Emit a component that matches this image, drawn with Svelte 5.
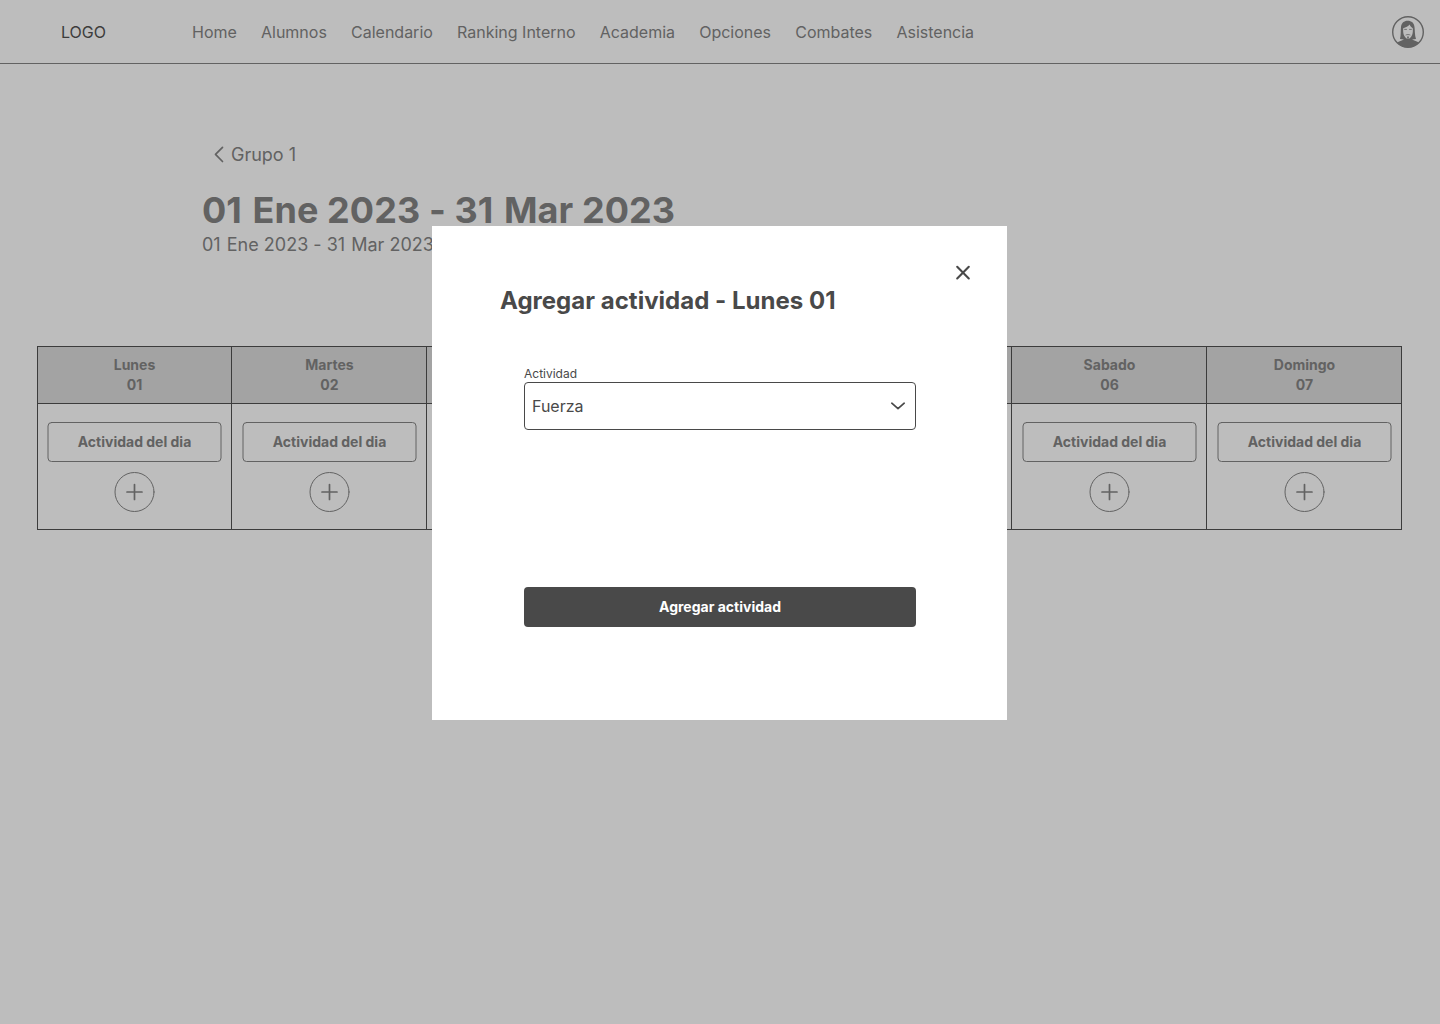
<script>
  const links = ['Home', 'Alumnos', 'Calendario', 'Ranking Interno', 'Academia', 'Opciones', 'Combates', 'Asistencia'];
  const days = [
    ['Lunes', '01'],
    ['Martes', '02'],
    ['Miercoles', '03'],
    ['Jueves', '04'],
    ['Viernes', '05'],
    ['Sabado', '06'],
    ['Domingo', '07']
  ];
</script>

{#snippet dates()}<span class="date-day">01</span> Ene 2023 - <span class="date-day">31</span> Mar 2023{/snippet}

<div class="page">
  <header>
    <span class="logo">LOGO</span>
    <nav>
      {#each links as link}
        <span>{link}</span>
      {/each}
    </nav>
    <svg class="avatar" width="32" height="32" viewBox="0 0 32 32">
      <circle cx="16" cy="16" r="15.300" fill="none" stroke="#626262" stroke-width="1.400" />
      <path fill="#626262" d="M5 26.500C7 25.200 9.800 24.800 12 23.500L8 23C9 19 8.600 14.500 9 11C9.500 7 12 4.800 15.500 4.800C19.800 4.800 22 7 22.500 11C23 14.500 22.600 19 24 23L20 23.500C22.200 24.800 25 25.200 27 26.500C24 29.800 20.500 31.200 16 31.200C11.500 31.200 8 29.800 5 26.500Z" />
      <path fill="#bdbdbd" d="M11.200 12.200C13.800 11.600 16.300 10.300 17.600 8.600C18.300 10.200 19.500 11.600 20.800 12.200C21.100 16 20.600 18.700 19.300 20.400C18.200 22 17.300 22.700 16 22.700C14.700 22.700 13.800 22 12.700 20.400C11.400 18.700 10.900 16 11.200 12.200Z" />
      <path class="face" d="M12.600 13.400h1.900M17.500 13.400h1.900M14 18.900c1-.5 3-.5 4 0" />
      <path fill="#626262" d="M15.200 20.500h1.600v2h-1.600z" />
    </svg>
  </header>

  <main>
    <div class="back">
      <svg width="10" height="18" viewBox="0 0 10 18"><path d="M8.500 1.300L1.500 8.300L8.500 15.500" /></svg>
      <span>Grupo 1</span>
    </div>
    <h1>{@render dates()}</h1>
    <p class="range">{@render dates()}</p>

    <div class="week">
      {#each days as [name, number]}
        <section class="day">
          <div class="day-head"><span>{name}</span><span>{number}</span></div>
          <div class="day-body">
            <div class="activity">
              <svg width="175" height="40"><rect x="1" y=".5" width="173" height="39" rx="3.500" /></svg>
              <span>Actividad del dia</span>
            </div>
            <svg class="plus" width="41" height="40">
              <circle cx="20.500" cy="20" r="19.500" />
              <path d="M20.500 12.500v15M13 20h15" />
            </svg>
          </div>
        </section>
      {/each}
    </div>
  </main>

  <div class="modal">
    <svg class="close" width="16" height="16" viewBox="0 0 16 16"><path d="M2.200 1.800L13.800 13.400M13.800 1.800L2.200 13.400" /></svg>
    <h2>Agregar actividad - Lunes 01</h2>
    <div class="form">
      <span class="label">Actividad</span>
      <div class="select">
        <span>Fuerza</span>
        <svg width="16" height="10" viewBox="0 0 16 10"><path d="M1.800 2.200L8 7.700L14.200 2.200" /></svg>
      </div>
      <button>Agregar actividad</button>
    </div>
  </div>
</div>

<style>
  :global(body) {
    background: #bdbdbd;
  }
  .page {
    position: relative;
    box-sizing: border-box;
    width: 1440px;
    height: 1024px;
    overflow: hidden;
    background: #bdbdbd;
    color: #626262;
    font-family: Inter, "Liberation Sans", sans-serif;
    white-space: nowrap;
  }
  header {
    box-sizing: border-box;
    display: flex;
    align-items: center;
    height: 64px;
    padding: 0 16px 0 61px;
    border-bottom: 1px solid #626262;
    font-size: 16px;
    line-height: 24px;
  }
  .logo {
    width: 131px;
    color: #3c3c3c;
  }
  nav {
    display: flex;
    flex: 1;
    gap: 24.15px;
  }
  .face {
    fill: none;
    stroke: #626262;
    stroke-width: 0.8;
  }
  .back {
    display: flex;
    align-items: center;
    gap: 7px;
    padding: 79px 0 0 214px;
    font-size: 18px;
    line-height: 24px;
  }
  svg path,
  svg rect,
  svg circle {
    stroke-linecap: round;
    stroke-linejoin: round;
  }
  .back path {
    fill: none;
    stroke: #626262;
    stroke-width: 1.7;
  }
  h1 {
    margin: 19px 0 0 202px;
    font-size: 36px;
    line-height: 48px;
    font-weight: 700;
    letter-spacing: 0.0027em;
  }
  .range {
    margin: 0 0 0 202px;
    font-size: 18px;
    line-height: 22px;
    letter-spacing: 0.001em;
  }
  .date-day {
    margin-right: 0.05em;
  }
  .week {
    box-sizing: border-box;
    display: grid;
    grid-template-columns: 194px repeat(6, 195px);
    width: 1365px;
    height: 184px;
    margin: 90px 0 0 37px;
    border: 1px solid #3c3c3c;
    border-right: 0;
  }
  .day {
    border-right: 1px solid #3c3c3c;
  }
  .day-head {
    box-sizing: border-box;
    display: flex;
    flex-direction: column;
    align-items: center;
    height: 57px;
    padding-top: 8px;
    border-bottom: 1px solid #3c3c3c;
    background: #a3a3a3;
    font-size: 14px;
    line-height: 20px;
    font-weight: 700;
  }
  .day + .day .day-head {
    padding-left: 1px;
  }
  .day-body {
    display: flex;
    flex-direction: column;
    align-items: flex-end;
    gap: 10px;
    padding: 18px 9px 0 0;
  }
  .activity {
    display: grid;
    place-items: center;
    height: 40px;
    font-size: 14px;
    line-height: 20px;
    font-weight: 700;
  }
  .activity > * {
    grid-area: 1 / 1;
  }
  .activity rect,
  .plus circle {
    fill: none;
    stroke: #626262;
    stroke-width: 1;
  }
  .plus {
    margin-right: 67px;
  }
  .plus path {
    stroke: #626262;
    stroke-width: 1.7;
  }
  .modal {
    position: absolute;
    box-sizing: border-box;
    left: 432px;
    top: 226px;
    width: 575px;
    height: 494px;
    padding: 39px 36px 0 68px;
    background: #fff;
    color: #494949;
    display: flex;
    flex-direction: column;
  }
  .close {
    align-self: flex-end;
  }
  .close path {
    stroke: #494949;
    stroke-width: 2.1;
  }
  h2 {
    margin: 4px 0 0;
    font-size: 24px;
    line-height: 32px;
    font-weight: 700;
    letter-spacing: 0.02px;
  }
  .form {
    display: flex;
    flex-direction: column;
    width: 392px;
    margin: 49px 0 0 24px;
  }
  .label {
    font-size: 12px;
    line-height: 16px;
  }
  .select {
    box-sizing: border-box;
    display: flex;
    align-items: center;
    justify-content: space-between;
    height: 48px;
    padding: 0 9px 0 7px;
    border: 1px solid #494949;
    border-radius: 4px;
    font-size: 16px;
  }
  .select path {
    fill: none;
    stroke: #494949;
    stroke-width: 1.7;
  }
  button {
    height: 40px;
    margin-top: 157px;
    padding: 0;
    border: 0;
    border-radius: 4px;
    background: #494949;
    color: #fff;
    font: 700 14px/20px Inter, "Liberation Sans", sans-serif;
  }
</style>
